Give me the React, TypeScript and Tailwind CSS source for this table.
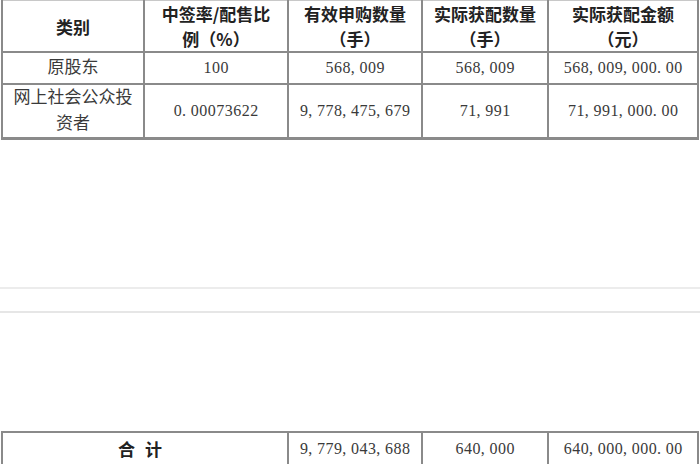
import React from "react";

const cjk = "font-['Liberation_Serif','Noto_Sans_CJK_SC',serif]";
const head = "font-['Noto_Sans_CJK_SC',sans-serif] font-semibold text-[#222]";

function Num({ v }: { v: string }) {
  return (
    <span className="inline-flex">
      {v.split("").map((c, i) => (
        <span
          key={i}
          className={
            c === "," || c === "."
              ? "w-[8.5px] text-left"
              : "w-[8.5px] text-center"
          }
        >
          {c}
        </span>
      ))}
    </span>
  );
}

const rows = [
  {
    name: ["原股东"],
    rate: "100",
    apply: "568,009",
    got: "568,009",
    amount: "568,009,000.00",
  },
  {
    name: ["网上社会公众投", "资者"],
    rate: "0.00073622",
    apply: "9,778,475,679",
    got: "71,991",
    amount: "71,991,000.00",
  },
];

function Cols() {
  return (
    <colgroup>
      <col className="w-[142px]" />
      <col className="w-[144px]" />
      <col className="w-[134px]" />
      <col className="w-[126px]" />
      <col className="w-[150px]" />
    </colgroup>
  );
}

export default function App() {
  const cell = "border-2 border-[#8a8a8a] text-center align-middle p-0";
  return (
    <div className="w-[700px] h-[464px] overflow-hidden bg-white">
      <table className="ml-px w-[696px] table-fixed border-collapse border-t border-t-[#c8c8c8]">
        <Cols />
        <thead>
          <tr className={`h-[51px] text-[17px] leading-[25px] ${head}`}>
            <th className={`${cell} border-t-0`}>类别</th>
            <th className={`${cell} border-t-0`}>
              中签率/配售比
              <br />
              例（%）
            </th>
            <th className={`${cell} border-t-0`}>
              有效申购数量
              <br />
              （手）
            </th>
            <th className={`${cell} border-t-0`}>
              实际获配数量
              <br />
              （手）
            </th>
            <th className={`${cell} border-t-0`}>
              实际获配金额
              <br />
              （元）
            </th>
          </tr>
        </thead>
        <tbody className={`text-[16px] text-[#3a3a3a] ${cjk}`}>
          {rows.map((r, i) => (
            <tr
              key={i}
              className={i === 0 ? "h-[32px]" : "h-[53px] border-b-[3px] border-b-[#8a8a8a]"}
            >
              <td className={`${cell} text-[17px] leading-[26px]`}>
                {r.name.map((n, j) => (
                  <div key={j}>{n}</div>
                ))}
              </td>
              <td className={cell}>
                <Num v={r.rate} />
              </td>
              <td className={cell}>
                <Num v={r.apply} />
              </td>
              <td className={cell}>
                <Num v={r.got} />
              </td>
              <td className={cell}>
                <Num v={r.amount} />
              </td>
            </tr>
          ))}
        </tbody>
      </table>

      <div className="mt-[147px] h-[2px] bg-[#ececec]" />
      <div className="mt-[22px] h-[2px] bg-[#e6e6e6]" />

      <table className="mt-[118px] ml-px w-[696px] table-fixed border-collapse">
        <Cols />
        <tbody className={`text-[16px] text-[#3a3a3a] ${cjk}`}>
          <tr className="h-[34px]">
            <td colSpan={2} className={`${cell} ${head} text-[17px] tracking-[10px]`}>
              合计
            </td>
            <td className={cell}>
              <Num v="9,779,043,688" />
            </td>
            <td className={cell}>
              <Num v="640,000" />
            </td>
            <td className={cell}>
              <Num v="640,000,000.00" />
            </td>
          </tr>
        </tbody>
      </table>
    </div>
  );
}
